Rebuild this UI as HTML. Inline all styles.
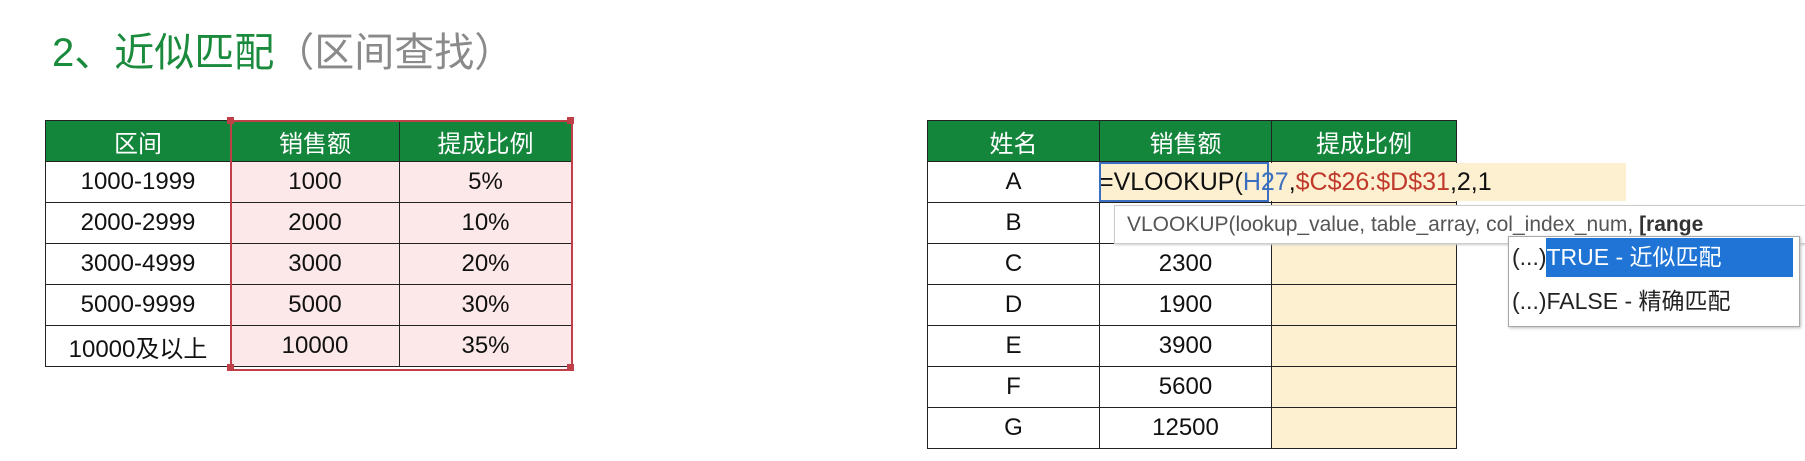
<!DOCTYPE html><html><head><meta charset="utf-8"><style>
body{margin:0;width:1805px;height:461px;background:#fff;position:relative;overflow:hidden;font-family:"Liberation Sans","Noto Sans CJK SC",sans-serif;}
.a{position:absolute}
table{border-collapse:collapse;position:absolute;table-layout:fixed}
td{border:1.5px solid #222;text-align:center;font-size:24px;height:40px;padding:0;color:#111;white-space:nowrap}
th{background:#14863c;color:#fff;font-weight:normal;font-size:24px;border:1.5px solid #222;height:40px;padding:0}
</style></head><body>
<div class="a" style="left:52px;top:20px;font-size:40px;color:#1a8a3c;white-space:nowrap">2、近似匹配<span style="color:#8a8a8a">（区间查找）</span></div>

<table style="left:45px;top:120px;width:526px">
<colgroup><col style="width:185px"><col style="width:169px"><col style="width:172px"></colgroup>
<tr><th>区间</th><th>销售额</th><th>提成比例</th></tr>
<tr><td>1000-1999</td><td style="background:#fce8e8">1000</td><td style="background:#fce8e8">5%</td></tr>
<tr><td>2000-2999</td><td style="background:#fce8e8">2000</td><td style="background:#fce8e8">10%</td></tr>
<tr><td>3000-4999</td><td style="background:#fce8e8">3000</td><td style="background:#fce8e8">20%</td></tr>
<tr><td>5000-9999</td><td style="background:#fce8e8">5000</td><td style="background:#fce8e8">30%</td></tr>
<tr><td>10000及以上</td><td style="background:#fce8e8">10000</td><td style="background:#fce8e8">35%</td></tr>
</table>
<div class="a" style="left:230px;top:120px;width:339px;height:247px;border:2px solid #c0404a"></div>
<div class="a" style="left:227px;top:117px;width:7px;height:7px;background:#c0404a"></div>
<div class="a" style="left:567px;top:117px;width:7px;height:7px;background:#c0404a"></div>
<div class="a" style="left:227px;top:364px;width:7px;height:7px;background:#c0404a"></div>
<div class="a" style="left:567px;top:364px;width:7px;height:7px;background:#c0404a"></div>

<table style="left:927px;top:120px;width:529px">
<colgroup><col style="width:172px"><col style="width:172px"><col style="width:185px"></colgroup>
<tr><th>姓名</th><th>销售额</th><th>提成比例</th></tr>
<tr><td>A</td><td></td><td style="background:#fdf0d0"></td></tr>
<tr><td>B</td><td></td><td style="background:#fdf0d0"></td></tr>
<tr><td>C</td><td>2300</td><td style="background:#fdf0d0"></td></tr>
<tr><td>D</td><td>1900</td><td style="background:#fdf0d0"></td></tr>
<tr><td>E</td><td>3900</td><td style="background:#fdf0d0"></td></tr>
<tr><td>F</td><td>5600</td><td style="background:#fdf0d0"></td></tr>
<tr><td>G</td><td>12500</td><td style="background:#fdf0d0"></td></tr>
</table>
<div class="a" style="left:1099px;top:163px;width:527px;height:38px;background:#fdf0d0;font-size:25px;line-height:38px;color:#111">=VLOOKUP(<span style="color:#3a6fc0">H27</span>,<span style="color:#c0392b">$C$26:$D$31</span>,2,1</div>
<div class="a" style="left:1099px;top:162px;width:170px;height:40px;border:2px solid #3a6fc0;box-sizing:border-box"></div>
<div class="a" style="left:1114px;top:205px;width:700px;height:37px;background:#fff;border:1px solid #ccc;box-shadow:1px 1px 2px #ccc;font-size:21px;line-height:37px;color:#555;padding-left:12px;white-space:nowrap">VLOOKUP(lookup_value, table_array, col_index_num, <b style="color:#333">[range</b></div>
<div class="a" style="left:1508px;top:236px;width:290px;height:89px;background:#fff;border:1px solid #aaa;box-shadow:1px 1px 3px #bbb"></div>
<div class="a" style="left:1546px;top:238px;width:247px;height:39px;background:#1f74d6"></div>
<div class="a" style="left:1512px;top:238px;font-size:23px;line-height:39px;color:#222;white-space:nowrap">(...)<span style="color:#fff">TRUE - 近似匹配</span></div>
<div class="a" style="left:1512px;top:282px;font-size:23px;line-height:39px;color:#222;white-space:nowrap">(...)FALSE - 精确匹配</div>
</body></html>
